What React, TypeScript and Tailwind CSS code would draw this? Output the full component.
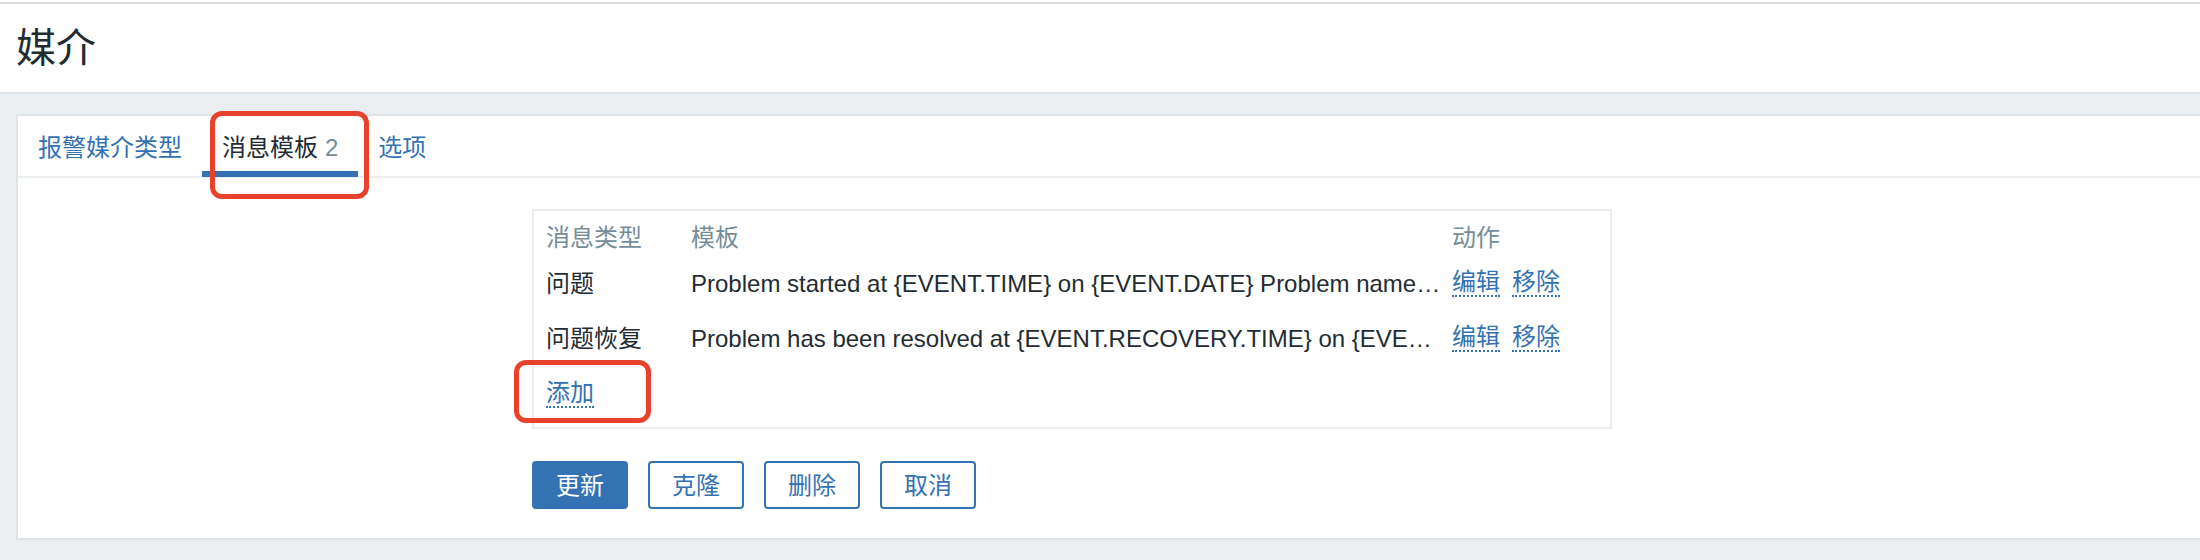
import React from "react";

const font = {
  fontFamily: '"Liberation Sans", "Noto Sans CJK SC", sans-serif',
};

// template bodies as the list shows them (cut to the column width)
const templates = [
  {
    type: "问题",
    text: "Problem started at {EVENT.TIME} on {EVENT.DATE} Problem name…",
  },
  {
    type: "问题恢复",
    text: "Problem has been resolved at {EVENT.RECOVERY.TIME} on {EVE…",
  },
];

function DottedLink({ children }: { children: React.ReactNode }) {
  return (
    <a className="cursor-pointer border-b-2 border-dotted border-[#3372b3] pb-[1px] leading-none text-[#3372b3]">
      {children}
    </a>
  );
}

function Tabs() {
  return (
    <div className="flex h-[62px] border-b-2 border-[#ebeef0]">
      <div className="flex h-[60px] items-center px-[20px] pt-[3px] text-[24px] text-[#3372b3]">
        报警媒介类型
      </div>
      <div className="mb-[-1px] flex h-[61px] items-center border-b-[6px] border-[#3372b3] px-[20px] pt-[8px] text-[24px] text-[#1f2c33]">
        消息模板
        <span className="ml-[7px] text-[#768d99]">2</span>
      </div>
      <div className="flex h-[60px] items-center px-[20px] pt-[3px] text-[24px] text-[#3372b3]">
        选项
      </div>
    </div>
  );
}

function TemplateTable() {
  return (
    <div className="w-[1080px] border-2 border-[#ebeef0] px-[12px] pb-[5px] pt-[9px] text-[24px]">
      <div className="grid h-[36px] grid-cols-[145px_761px_1fr] items-center text-[#768d99]">
        <div>消息类型</div>
        <div>模板</div>
        <div>动作</div>
      </div>
      {templates.map((t) => (
        <div
          key={t.type}
          className="grid h-[55px] grid-cols-[145px_761px_1fr] items-center text-[#1f2c33]"
        >
          <div>{t.type}</div>
          <div className="whitespace-nowrap">{t.text}</div>
          <div className="flex gap-[12px]">
            <DottedLink>编辑</DottedLink>
            <DottedLink>移除</DottedLink>
          </div>
        </div>
      ))}
      <div className="flex h-[56px] items-center">
        <DottedLink>添加</DottedLink>
      </div>
    </div>
  );
}

function Buttons() {
  const outline =
    "flex h-[48px] w-[96px] items-center justify-center rounded-[4px] border-2 border-[#3372b3] bg-white pt-[2px] text-[24px] text-[#3372b3]";
  return (
    <div className="mt-[32px] flex gap-[20px]">
      <button className="flex h-[48px] w-[96px] items-center justify-center rounded-[4px] bg-[#3372b3] pt-[2px] text-[24px] text-white">
        更新
      </button>
      <button className={outline}>克隆</button>
      <button className={outline}>删除</button>
      <button className={outline}>取消</button>
    </div>
  );
}

export default function App() {
  return (
    <div
      className="relative h-[560px] w-[2200px] overflow-hidden bg-[#ebeef0]"
      style={font}
    >
      <div className="bg-white pt-[2px]">
        <div className="flex h-[92px] items-center border-t-2 border-b-2 border-t-[#dcdcdc] border-b-[#dfe4e7] px-[16px]">
          <h1 className="text-[40px] leading-none text-[#1f2c33]">媒介</h1>
        </div>
      </div>

      <div className="pt-[20px]">
        <div className="ml-[16px] border-y-2 border-l-2 border-[#dfe4e7] bg-white">
          <Tabs />
          <div className="pb-[29px] pl-[514px] pt-[31px]">
            <TemplateTable />
            <Buttons />
          </div>
        </div>
      </div>

      {/* annotation boxes */}
      <div className="absolute left-[210px] top-[111px] h-[88px] w-[159px] rounded-[12px] border-[5px] border-[#e8412c]" />
      <div className="absolute left-[514px] top-[360px] h-[63px] w-[137px] rounded-[12px] border-[5px] border-[#e8412c]" />
    </div>
  );
}
